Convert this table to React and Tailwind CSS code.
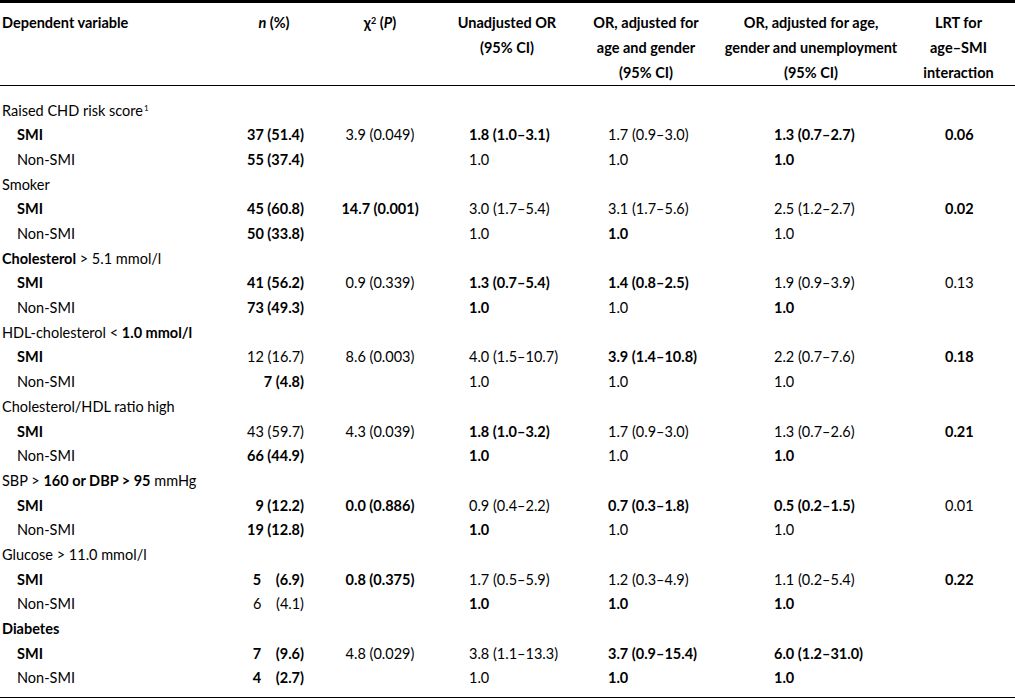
import React from "react";

const groups = [
  {
    label: (
      <>
        Raised CHD risk score<span className="text-[8px] align-[5px] ml-[1px]">1</span>
      </>
    ),
    rows: [
      ["SMI", "*37 (51.4)", "3.9 (0.049)", "*1.8 (1.0–3.1)", "1.7 (0.9–3.0)", "*1.3 (0.7–2.7)", "*0.06"],
      ["Non-SMI", "*55 (37.4)", "", "1.0", "1.0", "*1.0", ""],
    ],
  },
  {
    label: "Smoker",
    rows: [
      ["SMI", "*45 (60.8)", "*14.7 (0.001)", "3.0 (1.7–5.4)", "3.1 (1.7–5.6)", "2.5 (1.2–2.7)", "*0.02"],
      ["Non-SMI", "*50 (33.8)", "", "1.0", "*1.0", "1.0", ""],
    ],
  },
  {
    label: (
      <>
        <span className="font-bold">Cholesterol</span> &gt; 5.1 mmol/l
      </>
    ),
    rows: [
      ["SMI", "*41 (56.2)", "0.9 (0.339)", "*1.3 (0.7–5.4)", "*1.4 (0.8–2.5)", "1.9 (0.9–3.9)", "0.13"],
      ["Non-SMI", "*73 (49.3)", "", "*1.0", "1.0", "*1.0", ""],
    ],
  },
  {
    label: (
      <>
        HDL-cholesterol &lt; <span className="font-bold">1.0 mmol/l</span>
      </>
    ),
    rows: [
      ["SMI", "12 (16.7)", "8.6 (0.003)", "4.0 (1.5–10.7)", "*3.9 (1.4–10.8)", "2.2 (0.7–7.6)", "*0.18"],
      ["Non-SMI", "*7 (4.8)", "", "1.0", "1.0", "1.0", ""],
    ],
  },
  {
    label: "Cholesterol/HDL ratio high",
    rows: [
      ["SMI", "43 (59.7)", "4.3 (0.039)", "*1.8 (1.0–3.2)", "1.7 (0.9–3.0)", "1.3 (0.7–2.6)", "*0.21"],
      ["Non-SMI", "*66 (44.9)", "", "*1.0", "1.0", "*1.0", ""],
    ],
  },
  {
    label: (
      <>
        SBP &gt; <span className="font-bold">160 or DBP &gt; 95</span> mmHg
      </>
    ),
    rows: [
      ["SMI", "*9 (12.2)", "*0.0 (0.886)", "0.9 (0.4–2.2)", "*0.7 (0.3–1.8)", "*0.5 (0.2–1.5)", "0.01"],
      ["Non-SMI", "*19 (12.8)", "", "*1.0", "1.0", "1.0", ""],
    ],
  },
  {
    label: "Glucose > 11.0 mmol/l",
    rows: [
      ["SMI", "*5\u2002\u2002(6.9)", "*0.8 (0.375)", "1.7 (0.5–5.9)", "1.2 (0.3–4.9)", "1.1 (0.2–5.4)", "*0.22"],
      ["Non-SMI", "6\u2002\u2002(4.1)", "", "*1.0", "*1.0", "*1.0", ""],
    ],
  },
  {
    label: <span className="font-bold">Diabetes</span>,
    rows: [
      ["SMI", "*7\u2002\u2002(9.6)", "4.8 (0.029)", "3.8 (1.1–13.3)", "*3.7 (0.9–15.4)", "*6.0 (1.2–31.0)", ""],
      ["Non-SMI", "*4\u2002\u2002(2.7)", "", "1.0", "*1.0", "*1.0", ""],
    ],
  },
];

const Cell = ({ v, className }) => {
  const bold = v.startsWith("*");
  return (
    <td className={`${className} ${bold ? "font-bold" : "font-normal"} whitespace-pre`}>
      {bold ? v.slice(1) : v}
    </td>
  );
};

export default function App() {
  return (
    <div
      className="w-[1015px] h-[699px] bg-white text-black text-[14.5px]"
      style={{ fontFamily: "Lato, 'Open Sans', sans-serif" }}
    >
      <table className="w-[1015px] table-fixed border-collapse">
        <colgroup>
          <col className="w-[230px]" />
          <col className="w-[88px]" />
          <col className="w-[124px]" />
          <col className="w-[130px]" />
          <col className="w-[148px]" />
          <col className="w-[182px]" />
          <col className="w-[113px]" />
        </colgroup>
        <thead className="border-t-[3px] border-b border-black">
          <tr className="align-top font-bold leading-[25px]">
            <th className="text-left pt-[7px] pb-[5px] pl-[2px] font-bold">Dependent variable</th>
            <th className="pt-[7px] font-bold">
              <i>n</i> (%)
            </th>
            <th className="pt-[7px] font-bold">
              χ<sup className="text-[9px]">2</sup> (<i>P</i>)
            </th>
            <th className="pt-[7px] font-bold">
              Unadjusted OR
              <br />
              (95% CI)
            </th>
            <th className="pt-[7px] font-bold">
              OR, adjusted for
              <br />
              age and gender
              <br />
              (95% CI)
            </th>
            <th className="pt-[7px] font-bold">
              OR, adjusted for age,
              <br />
              gender and unemployment
              <br />
              (95% CI)
            </th>
            <th className="pt-[7px] font-bold">
              LRT for
              <br />
              age–SMI
              <br />
              interaction
            </th>
          </tr>
        </thead>
        <tbody className="border-b-[1.5px] border-black">
          <tr className="h-[13px]">
            <td colSpan={7}></td>
          </tr>
          {groups.map((g, gi) => (
            <React.Fragment key={gi}>
              <tr className="h-[24.7px]">
                <td colSpan={7} className="pl-[2px] leading-none">
                  {g.label}
                </td>
              </tr>
              {g.rows.map((r, ri) => (
                <tr key={ri} className="h-[24.7px] leading-none">
                  <td className={`pl-[17px] ${r[0] === "SMI" ? "font-bold" : ""}`}>{r[0]}</td>
                  <Cell v={r[1]} className="text-right pr-[14px]" />
                  <Cell v={r[2]} className="text-center" />
                  <Cell v={r[3]} className="text-left pl-[27px]" />
                  <Cell v={r[4]} className="text-left pl-[36px]" />
                  <Cell v={r[5]} className="text-left pl-[54px]" />
                  <Cell v={r[6]} className="text-left pl-[43px]" />
                </tr>
              ))}
            </React.Fragment>
          ))}
          <tr className="h-[6px]">
            <td colSpan={7}></td>
          </tr>
        </tbody>
      </table>
    </div>
  );
}
